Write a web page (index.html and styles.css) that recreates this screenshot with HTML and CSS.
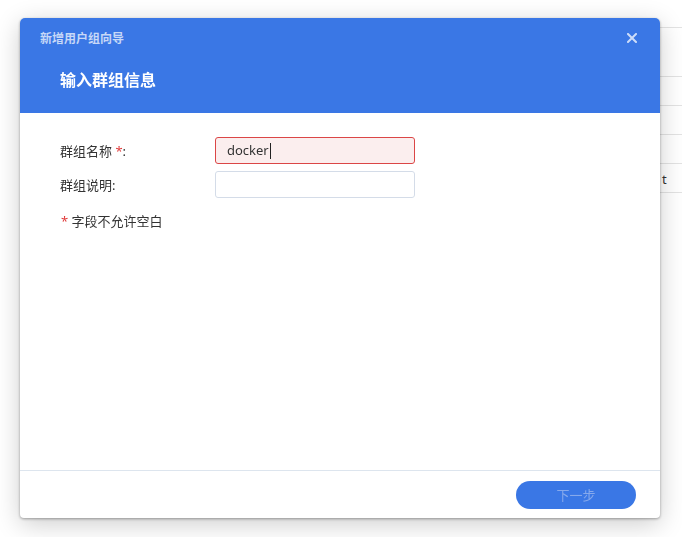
FILE: index.html
```html
<!DOCTYPE html>
<html lang="zh-CN">
<head>
    <meta charset="UTF-8">
    <meta name="viewport" content="width=device-width, initial-scale=1.0">
    <title>新增用户组向导</title>
    <link rel="stylesheet" href="styles.css">
</head>
<body>

<!-- list page behind the wizard -->
<div class="page">
    <div class="row row-head"></div>
    <div class="row"></div>
    <div class="row"></div>
    <div class="row"></div>
    <div class="row"><span class="cell">t</span></div>
    <div class="row"></div>
</div>

<div class="dialog">
    <div class="dialog-header">
        <div class="dialog-caption">
            <span>新增用户组向导</span>
            <span class="close">
                <svg width="10" height="10" viewBox="0 0 10 10">
                    <path d="M1 1L9 9M9 1L1 9" stroke="currentColor" stroke-width="2" stroke-linecap="square"/>
                </svg>
            </span>
        </div>
        <div class="dialog-title">输入群组信息</div>
    </div>

    <div class="dialog-body">
        <div class="form-row">
            <label class="form-label">群组名称 <span class="req">*</span>:</label>
            <div class="input input-error">docker<span class="caret"></span></div>
        </div>
        <div class="form-row">
            <label class="form-label">群组说明:</label>
            <div class="input"></div>
        </div>
        <p class="note"><span class="req">*</span> 字段不允许空白</p>
    </div>

    <div class="dialog-footer">
        <button class="btn-next" disabled>下一步</button>
    </div>
</div>

</body>
</html>
```

FILE: styles.css
```css
* {
    box-sizing: border-box;
}
body {
    margin: 0;
    background: #fff;
    font-family: "Noto Sans", "Noto Sans CJK SC", sans-serif;
    color: #333;
}
.page {
    padding: 27px 0 0 560px;
}
.row {
    height: 29px;
    border-top: 1px solid #e3e3e3;
    position: relative;
}
.row-head {
    height: 49px;
}
.cell {
    position: absolute;
    left: 102px;
    top: 6px;
    font-size: 13px;
    color: #333;
}
.dialog {
    position: fixed;
    left: 20px;
    top: 18px;
    width: 640px;
    height: 500px;
    background: #fff;
    border-radius: 5px 5px 4px 4px;
    box-shadow: 0 1px 3px rgba(0, 0, 0, 0.35), 0 6px 26px rgba(0, 0, 0, 0.2);
    display: flex;
    flex-direction: column;
    overflow: hidden;
}
.dialog-header {
    background: #3a77e5;
    height: 95px;
    flex-shrink: 0;
}
.dialog-caption {
    display: flex;
    justify-content: space-between;
    align-items: center;
    height: 40px;
    padding: 0 23px 0 20px;
    font-size: 12px;
    font-weight: bold;
    color: rgba(255, 255, 255, 0.72);
}
.close {
    display: flex;
    color: rgba(255, 255, 255, 0.75);
}
.dialog-title {
    padding: 0 40px;
    margin-top: 1px;
    line-height: 42px;
    font-size: 16px;
    font-weight: bold;
    color: #fff;
}
.dialog-body {
    flex: 1;
    padding: 24px 40px 0;
}
.form-row {
    display: flex;
    align-items: center;
    margin-bottom: 7px;
}
.form-label {
    width: 155px;
    font-size: 13px;
    color: #333;
}
.req {
    color: #e03c3c;
}
.input {
    width: 200px;
    height: 27px;
    border: 1px solid #d4dce8;
    border-radius: 3px;
    padding: 0 11px;
    font-size: 13px;
    line-height: 25px;
    color: #333;
    display: flex;
    align-items: center;
}
.input-error {
    border-color: #db4646;
    background: #fbeeee;
}
.caret {
    display: inline-block;
    width: 1px;
    height: 16px;
    background: #222;
    margin-left: 1px;
}
.note {
    margin: 13px 0 0 1px;
    font-size: 13px;
    color: #333;
}
.dialog-footer {
    height: 48px;
    flex-shrink: 0;
    border-top: 1px solid #dde5ee;
    display: flex;
    justify-content: flex-end;
    align-items: center;
    padding-right: 24px;
}
.btn-next {
    width: 120px;
    height: 28px;
    border: none;
    border-radius: 14px;
    background: #3a77e5;
    color: #86a9ec;
    font-family: inherit;
    font-size: 13px;
}
```
